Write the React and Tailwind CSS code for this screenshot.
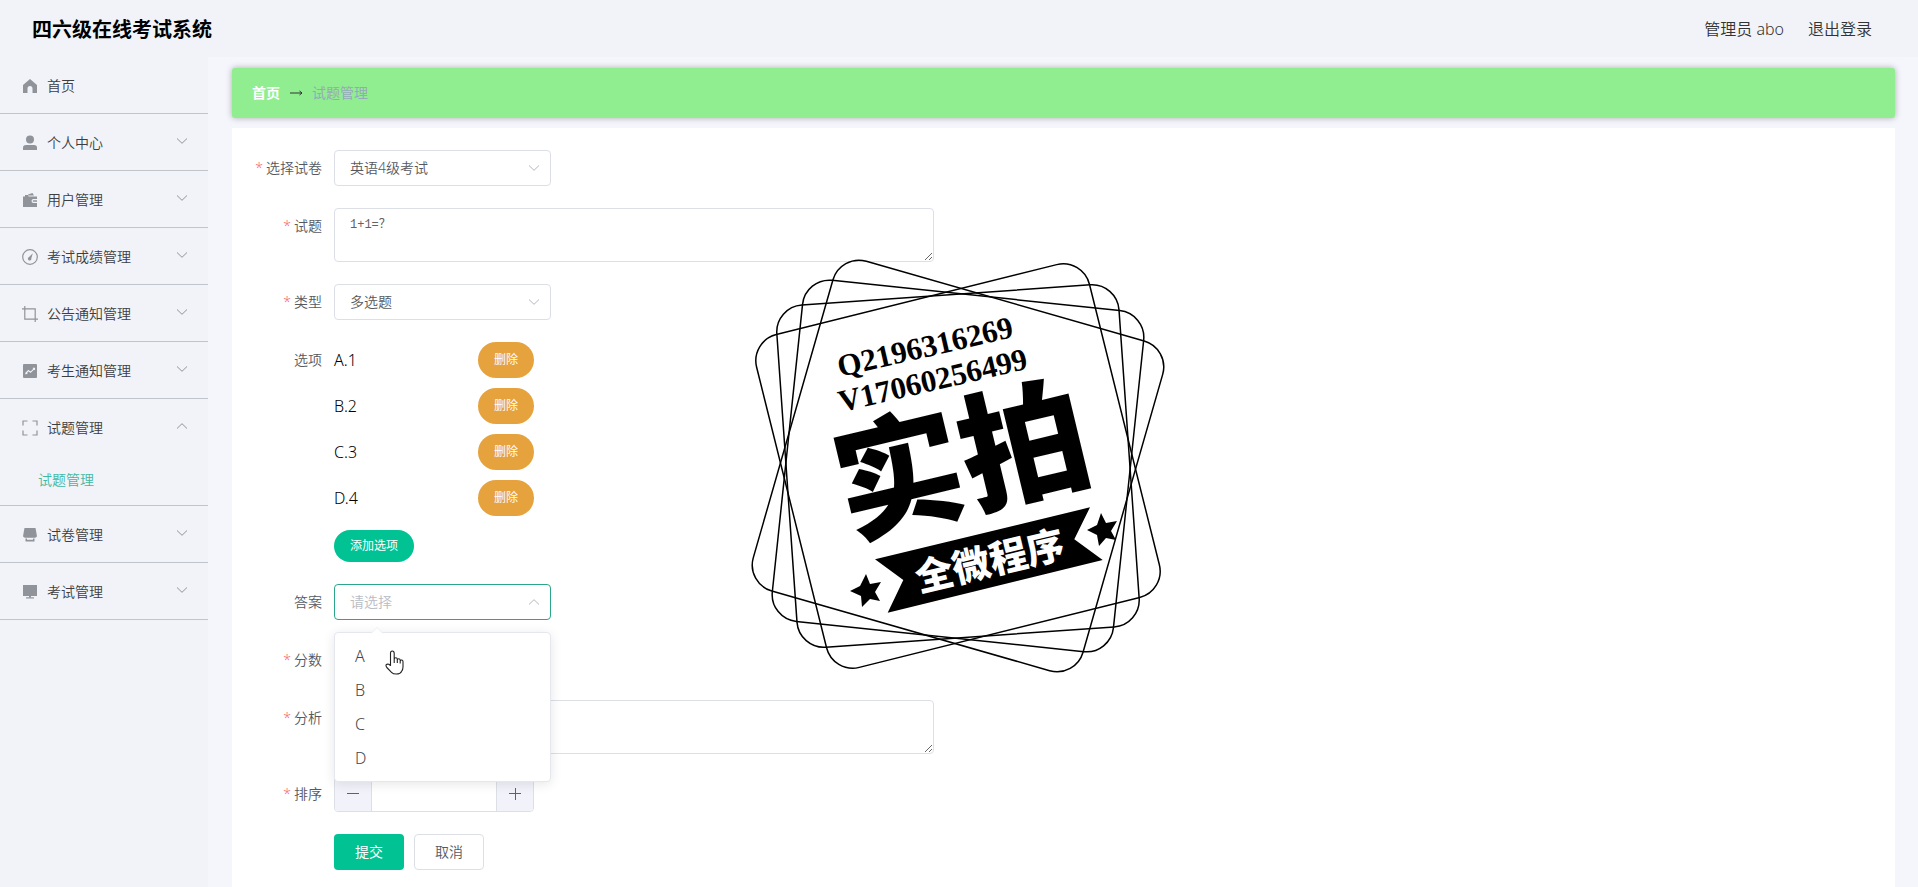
import { useState } from "react";
import { clsx } from "clsx";

const OPTIONS = [
  { code: "A", text: "1" },
  { code: "B", text: "2" },
  { code: "C", text: "3" },
  { code: "D", text: "4" },
];

const MENU = [
  { name: "首页", icon: "home" },
  { name: "个人中心", icon: "user", children: ["个人信息"] },
  { name: "用户管理", icon: "wallet", children: ["用户管理"] },
  { name: "考试成绩管理", icon: "gauge", children: ["考试成绩管理"] },
  { name: "公告通知管理", icon: "crop", children: ["公告通知管理"] },
  { name: "考生通知管理", icon: "chart", children: ["考生通知管理"] },
  { name: "试题管理", icon: "screen", children: ["试题管理"] },
  { name: "试卷管理", icon: "shop", children: ["试卷管理"] },
  { name: "考试管理", icon: "platform", children: ["考试管理"] },
];

const ICONS = {
  home: <path fill="currentColor" d="M8 1 1 7v8h4.500v-4.500a2.500 2.500 0 0 1 5 0V15H15V7z" />,
  user: (
    <g fill="currentColor">
      <circle cx="8" cy="4.500" r="4" />
      <path d="M1 15v-2.500Q1 10 4 10h8q3 0 3 2.500V15z" />
    </g>
  ),
  wallet: (
    <g fill="currentColor">
      <path d="M6 2.600 10.500 1l1.500 2.500H7z" />
      <path d="M1 4.500h14V7h-3.500a2 2 0 0 0 0 4H15v4H1z" />
      <path d="M3 3h3.500v2H3zM11.500 8.200H15v1.600h-3.500a.8.8 0 0 1 0-1.600z" />
    </g>
  ),
  gauge: (
    <g>
      <circle cx="8" cy="8" r="7.300" fill="none" stroke="currentColor" strokeWidth="1.200" />
      <path fill="currentColor" d="M10.800 4.200 9.300 9.500a1.700 1.700 0 1 1-2.500-1.200z" />
    </g>
  ),
  crop: <path fill="none" stroke="currentColor" strokeWidth="1.200" d="M0 2.800h13.200V16M2.800 0v13.200H16" />,
  chart: (
    <g>
      <rect x="1" y="1" width="14" height="14" rx="1" fill="currentColor" />
      <path fill="none" stroke="#f2f3f8" strokeWidth="1.100" d="m3.500 10.500 3-3 2 1.800 4-4M3.500 11l2-1M10.800 5.300h1.700V7" />
    </g>
  ),
  screen: (
    <path fill="none" stroke="currentColor" strokeWidth="1.200" d="M1 5.500V1h4.500M10.500 1H15v4.500M15 10.500V15h-4.500M5.500 15H1v-4.500" />
  ),
  shop: (
    <g fill="currentColor">
      <path d="M2.500 1h11L15 9.300q-.7 1.400-2 1.400H3q-1.300 0-2-1.400z" />
      <path d="M3.500 11.500H5v1.300h6v-1.300h1.500v3h-9z" />
    </g>
  ),
  platform: (
    <g fill="currentColor">
      <path d="M1 1h14v11H1zM7 12h2v1.500H7z" />
      <path d="M4 13.300h8v1.200H4z" />
    </g>
  ),
};

function MenuIcon({ name }) {
  return (
    <svg viewBox="0 0 16 16" className="size-4 shrink-0 text-[#909399]" aria-hidden="true">
      {ICONS[name]}
    </svg>
  );
}

function Chevron({ up, className }) {
  return (
    <svg viewBox="0 0 12 12" className={clsx("size-3", up && "rotate-180", className)} aria-hidden="true">
      <path d="M1 3.500 6 8.300l5-4.800" fill="none" stroke="currentColor" strokeWidth="1" />
    </svg>
  );
}

function Sidebar() {
  const [open, setOpen] = useState("试题管理");

  return (
    <nav className="w-52 shrink-0 bg-[#f2f3f8]">
      {MENU.map((item) => (
        <div key={item.name} className="border-b border-[#c0c4cc]">
          <button
            type="button"
            className="flex h-14 w-full items-center gap-[9px] pt-0.5 pr-5 pl-[22px] text-sm text-[#3c3e42]"
            onClick={() => setOpen(open === item.name ? null : item.name)}
          >
            <MenuIcon name={item.icon} />
            <span className="flex-1 text-left">{item.name}</span>
            {item.children && <Chevron up={open === item.name} className="mb-1 text-[#909399]" />}
          </button>
          {item.children && open === item.name && (
            <div>
              {item.children.map((child) => (
                <a key={child} href="#" className="flex h-[50px] items-center pl-[38px] text-sm text-[#3fb8a4]">
                  {child}
                </a>
              ))}
            </div>
          )}
        </div>
      ))}
    </nav>
  );
}

function FormRow({ label, htmlFor, required, children }) {
  return (
    <div className="grid grid-cols-[90px_1fr] gap-x-3">
      <label htmlFor={htmlFor} className="h-9 text-right text-sm leading-9 text-[#56595f]">
        {required && <span className="mr-[3px] text-[#f56c6c]">*</span>}
        {label}
      </label>
      <div>{children}</div>
    </div>
  );
}

function SelectBox({ id, options, active, placeholder, children }) {
  return (
    <div className="relative w-[217px]">
      <select
        id={id}
        defaultValue={placeholder ? "" : options[0]}
        className={clsx(
          "block h-9 w-full appearance-none rounded border bg-white px-[15px] text-sm outline-none",
          active ? "border-[#2ca68a]" : "border-[#dcdfe6]",
          placeholder ? "text-[#b8bcc4]" : "text-[#56595f]"
        )}
      >
        {placeholder && <option value="">{placeholder}</option>}
        {options.map((option) => (
          <option key={option}>{option}</option>
        ))}
      </select>
      <Chevron up={active} className="pointer-events-none absolute top-3 right-[11px] text-[#b4b8bf]" />
      {children}
    </div>
  );
}

function TextArea({ id, value }) {
  return (
    <textarea
      id={id}
      defaultValue={value}
      className="block h-[54px] w-full max-w-[600px] resize-y rounded border border-[#dcdfe6] bg-white px-[15px] py-[5px] font-['Liberation_Mono','Noto_Sans_CJK_SC',monospace] text-xs leading-[22px] font-normal text-[#606266] outline-none"
    />
  );
}

function NumberInput({ id }) {
  const [value, setValue] = useState("");

  return (
    <div className="flex h-9 w-[200px] overflow-hidden rounded border border-[#dcdfe6] text-[#606266]">
      <button
        type="button"
        aria-label="减少"
        className="flex w-[37px] items-center justify-center border-r border-[#dcdfe6] bg-[#f2f3fa]"
        onClick={() => setValue(Number(value) - 1)}
      >
        <svg viewBox="0 0 12 12" className="size-3">
          <path d="M0 5.500h12" stroke="currentColor" />
        </svg>
      </button>
      <input
        id={id}
        value={value}
        onChange={(e) => setValue(e.target.value)}
        className="w-0 flex-1 bg-white text-center text-sm outline-none"
      />
      <button
        type="button"
        aria-label="增加"
        className="flex w-[37px] items-center justify-center border-l border-[#dcdfe6] bg-[#f2f3fa]"
        onClick={() => setValue(Number(value) + 1)}
      >
        <svg viewBox="0 0 12 12" className="size-3">
          <path d="M0 5.500h12M6.500 0v12" stroke="currentColor" />
        </svg>
      </button>
    </div>
  );
}

function HandCursor() {
  return (
    <svg viewBox="0 0 19 25" className="pointer-events-none absolute top-[17px] left-[50px] h-[25px] w-[19px]" aria-hidden="true">
      <path
        d="M5.500 15.500V3.200Q5.500 1 7.300 1T9.200 3.200V9.500Q9.300 7.800 10.800 7.800T12.300 9.300V10Q12.500 8.700 13.800 8.700T15.200 10.200V11Q15.500 9.900 16.700 10T18 11.500V17Q18 19.500 16.500 21.500 15.400 24 11.500 24 8 24 6.500 22.300L1.800 17.500Q.5 15.700 1.300 14.700 2.200 13.700 3.800 14.300zM9.200 9v4M12.300 9.500V13M15.200 10.500V13.500"
        fill="#fff"
        stroke="#222"
        strokeWidth="1.100"
        strokeLinejoin="round"
      />
    </svg>
  );
}

function AnswerMenu() {
  return (
    <div className="absolute top-12 left-0 z-10 w-full rounded border border-[#e4e7ed] bg-white py-1.5 shadow-[0_2px_12px_rgba(0,0,0,0.1)]">
      <svg viewBox="0 0 12 7" className="absolute -top-1.5 left-9 h-[7px] w-3" aria-hidden="true">
        <path d="M0 6.500 6 .5l6 6" fill="#fff" stroke="#ebeef5" />
      </svg>
      <ul role="listbox" aria-label="答案">
        {OPTIONS.map((option) => (
          <li
            key={option.code}
            role="option"
            aria-selected="false"
            className="h-[34px] px-5 text-base leading-[34px] text-[#44474d]"
          >
            {option.code}
          </li>
        ))}
      </ul>
      <HandCursor />
    </div>
  );
}

function Stamp() {
  return (
    <svg
      viewBox="0 0 420 420"
      className="pointer-events-none absolute top-[128px] left-[515px] z-20 size-[420px]"
    >
      <g fill="none" stroke="#000" strokeWidth="1.500">
        <rect x="39.500" y="38.500" width="343" height="343" rx="27" transform="rotate(-14 211 210)" />
        <rect x="39.500" y="38.500" width="343" height="343" rx="27" transform="rotate(-4 211 210)" />
        <rect x="39.500" y="38.500" width="343" height="343" rx="27" transform="rotate(6 211 210)" />
        <rect x="39.500" y="38.500" width="343" height="343" rx="27" transform="rotate(16 211 210)" />
      </g>
      <g className="font-['Liberation_Serif','Noto_Sans_CJK_SC',serif] text-[31px] font-bold">
        <text transform="translate(93 121) rotate(-13)">Q2196316269</text>
        <text transform="translate(94 156) rotate(-13)">V17060256499</text>
      </g>
      <g className="font-['Noto_Sans_CJK_SC',sans-serif] font-black">
        <text transform="translate(101 280) rotate(-13.500)" className="text-[128px]">
          实拍
        </text>
        <path d="M128 303.300 343 251.300 327.300 283.300 355.700 304 140.700 356.700 156.300 324z" />
        <text transform="translate(172 336) rotate(-13.500)" className="text-[38px]" fill="#fff">
          全微程序
        </text>
      </g>
      <path d="m119 318 4 10 11-2-6 10 5 9-10-2-8 8-1-11-11-5 10-5z" />
      <path d="m354 257 5 10 11-2-6 10 5 9-10-2-7 8-2-11-10-5 10-5z" />
    </svg>
  );
}

function QuestionForm() {
  const [rows, setRows] = useState(OPTIONS);

  return (
    <form className="relative flex flex-1 flex-col gap-[22px] bg-white pt-[22px] pb-4" onSubmit={(e) => e.preventDefault()}>
      <FormRow label="选择试卷" htmlFor="paper" required>
        <SelectBox id="paper" options={["英语4级考试"]} />
      </FormRow>
      <FormRow label="试题" htmlFor="question" required>
        <TextArea id="question" value="1+1=？" />
      </FormRow>
      <FormRow label="类型" htmlFor="type" required>
        <SelectBox id="type" options={["多选题", "单选题", "判断题", "填空题"]} />
      </FormRow>
      <FormRow label="选项">
        <div className="flex w-[200px] flex-col gap-2.5">
          {rows.map((row) => (
            <div key={row.code} className="flex h-9 items-center justify-between">
              <span className="text-base text-black">
                {row.code}.{row.text}
              </span>
              <button
                type="button"
                className="h-9 w-14 rounded-full bg-[#e6a23c] text-xs font-normal text-white"
                onClick={() => setRows(rows.filter((r) => r.code !== row.code))}
              >
                删除
              </button>
            </div>
          ))}
        </div>
        <button type="button" className="mt-3.5 block h-8 w-20 rounded-full bg-[#00c292] text-xs font-normal text-white">
          添加选项
        </button>
      </FormRow>
      <FormRow label="答案" htmlFor="answer">
        <SelectBox id="answer" options={["A", "B", "C", "D"]} placeholder="请选择" active>
          <AnswerMenu />
        </SelectBox>
      </FormRow>
      <FormRow label="分数" htmlFor="score" required>
        <NumberInput id="score" />
      </FormRow>
      <FormRow label="分析" htmlFor="analysis" required>
        <TextArea id="analysis" />
      </FormRow>
      <FormRow label="排序" htmlFor="sort" required>
        <NumberInput id="sort" />
      </FormRow>
      <div className="flex gap-2.5 pl-[102px] text-sm">
        <button type="submit" className="h-9 w-[70px] rounded bg-[#00c292] font-normal text-white">
          提交
        </button>
        <button type="button" className="h-9 w-[70px] rounded border border-[#dcdfe6] bg-white text-[#56595f]">
          取消
        </button>
      </div>
      <Stamp />
    </form>
  );
}

export default function App() {
  return (
    <div className="flex min-h-screen flex-col bg-[#f5f6fb] font-['Noto_Sans','Noto_Sans_CJK_SC',sans-serif] font-[350]">
      <header className="flex h-[57px] items-center justify-between bg-[#f2f3f8] pr-[46px] pl-8">
        <h1 className="pt-0.5 text-xl font-bold text-black">四六级在线考试系统</h1>
        <div className="flex items-center gap-6 text-base text-[#333]">
          <span>管理员 abo</span>
          <a href="#">退出登录</a>
        </div>
      </header>
      <div className="flex flex-1">
        <Sidebar />
        <main className="flex min-w-0 flex-1 flex-col gap-2.5 pt-[11px] pr-[23px] pl-6">
          <div className="flex h-[50px] items-center gap-2 rounded-[3px] bg-[#90ee90] px-5 text-sm shadow-[0_0_6px_rgba(0,0,0,0.3)]">
            <a href="#" className="font-bold text-white">
              首页
            </a>
            <svg viewBox="0 0 16 8" className="h-2 w-4 text-[#303133]" aria-hidden="true">
              <path d="M2 4h12M11.500 2 14 4l-2.500 2" fill="none" stroke="currentColor" />
            </svg>
            <span className="font-normal text-[#97a8be]">试题管理</span>
          </div>
          <QuestionForm />
        </main>
      </div>
    </div>
  );
}
